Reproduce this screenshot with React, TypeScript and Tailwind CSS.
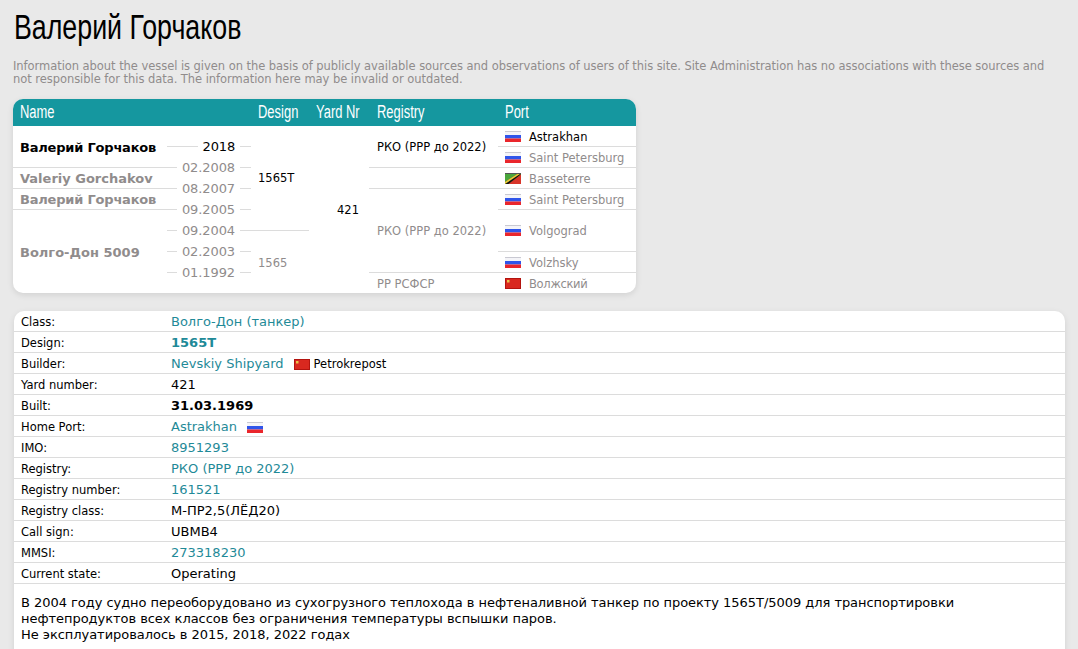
const narrow = "font-['Liberation_Sans',sans-serif]"

function FlagRu() {
  return (
    <svg width="16" height="11" viewBox="0 0 16 11" className="shrink-0">
      <rect width="16" height="4" fill="#f4f4f8" />
      <rect y="4" width="16" height="3.5" fill="#2f55ea" />
      <rect y="7.5" width="16" height="3.5" fill="#ea262c" />
      <rect width="16" height="1" fill="#c9c9d2" />
    </svg>
  )
}

function FlagKn() {
  return (
    <svg width="16" height="11" viewBox="0 0 16 11" className="shrink-0">
      <rect width="16" height="11" fill="#d8352a" />
      <polygon points="0,0 14,0 0,9" fill="#4aa63c" />
      <polygon points="0,9 14,0 16,0 16,1.5 3,11 0,11" fill="#e8cf3a" />
      <polygon points="0,11 15,1 16,1.5 3.5,11" fill="#111" />
      <rect width="16" height="1" fill="#555" />
    </svg>
  )
}

function FlagCn() {
  return (
    <svg width="16" height="11" viewBox="0 0 16 11" className="shrink-0">
      <rect width="16" height="11" fill="#d9281f" />
      <rect x="0.5" y="0.5" width="15" height="10" fill="none" stroke="#b3140f" />
      <rect x="2" y="2" width="2.5" height="2.5" fill="#e9c14a" />
    </svg>
  )
}

const dates = [
  { d: '2018', on: true, left: 'w-[31px]' },
  { d: '02.2008', left: 'flex-1' },
  { d: '08.2007', left: 'flex-1' },
  { d: '09.2005', left: 'flex-1' },
  { d: '09.2004', left: 'flex-1' },
  { d: '02.2003', left: 'flex-1' },
  { d: '01.1992', left: 'flex-1' },
]

const nameCell = 'flex items-center pl-[7px] pt-[2px] text-[13px] font-bold'
const line = 'border-b border-[#dcdcdc]'
const small = 'flex items-center pt-[2px] text-[11.5px]'
const portCell = 'flex items-center gap-2 pl-[7px] text-[11.5px] text-[#908c8c]'

// the site's header font is a narrow one, squeezed here from Liberation Sans
function Squeezed({ children, className }: { children: React.ReactNode; className: string }) {
  return <span className={`inline-block origin-left whitespace-nowrap ${narrow} ${className}`}>{children}</span>
}

function History() {
  return (
    <div className="w-[623px] rounded-[10px] bg-white shadow-[0_2px_6px_rgba(0,0,0,0.1)] overflow-hidden">
      <div className="h-[27px] pb-[2px] bg-[#15979f] text-white text-[18px] flex items-center">
        <div className="w-[238px] pl-[7px]"><Squeezed className="scale-x-[0.72]">Name</Squeezed></div>
        <div className="w-[58px] pl-[7px]"><Squeezed className="scale-x-[0.72]">Design</Squeezed></div>
        <div className="w-[60px] pl-[7px]"><Squeezed className="scale-x-[0.72]">Yard Nr</Squeezed></div>
        <div className="w-[129px] pl-[8px]"><Squeezed className="scale-x-[0.72]">Registry</Squeezed></div>
        <div className="pl-[7px]"><Squeezed className="scale-x-[0.72]">Port</Squeezed></div>
      </div>
      <div className="grid grid-cols-[154px_84px_58px_60px_129px_138px] grid-rows-[repeat(8,21px)] h-[167px] overflow-hidden">
        <div className={`${nameCell} col-start-1 row-start-1 row-span-2 text-black tracking-[-0.2px] ${line}`}>Валерий Горчаков</div>
        <div className={`${nameCell} col-start-1 row-start-3 text-[#908c8c] ${line}`}>Valeriy Gorchakov</div>
        <div className={`${nameCell} col-start-1 row-start-4 text-[#908c8c] tracking-[-0.2px] ${line}`}>Валерий Горчаков</div>
        <div className={`${nameCell} col-start-1 row-start-5 row-span-4 text-[#908c8c]`}>Волго-Дон 5009</div>

        <div className="col-start-2 row-start-1 row-span-8 pt-[10px]">
          {dates.map(x => (
            <div key={x.d} className="h-[21px] flex items-center text-[13px]">
              <div className={`${x.left} h-px bg-[#dcdcdc]`} />
              <span className={`px-[5px] tracking-[-0.1px] ${x.on ? 'ml-auto text-black' : 'text-[#908c8c]'}`}>{x.d}</span>
              <div className="w-[11px] h-px bg-[#dcdcdc]" />
            </div>
          ))}
        </div>

        <div className={`${small} col-start-3 row-start-1 row-span-5 pl-[7px] text-black ${line}`}>1565T</div>
        <div className={`${small} col-start-3 row-start-6 row-span-3 pl-[7px] text-[#908c8c]`}>1565</div>

        <div className={`${small} col-start-4 row-start-1 row-span-8 pl-[28px] text-black`}>421</div>

        <div className={`${small} col-start-5 row-start-1 row-span-2 pl-[8px] text-black ${line}`}>РКО (РРР до 2022)</div>
        <div className={`col-start-5 row-start-3 ${line}`} />
        <div className={`${small} col-start-5 row-start-4 row-span-4 pl-[8px] text-[#908c8c] ${line}`}>РКО (РРР до 2022)</div>
        <div className={`${small} col-start-5 row-start-8 pl-[8px] text-[#908c8c]`}>РР РСФСР</div>

        <div className={`${portCell} col-start-6 row-start-1 ${line} !text-black`}><FlagRu /><span className="pt-[4px]">Astrakhan</span></div>
        <div className={`${portCell} col-start-6 row-start-2 ${line}`}><FlagRu /><span className="pt-[4px]">Saint Petersburg</span></div>
        <div className={`${portCell} col-start-6 row-start-3 ${line}`}><FlagKn /><span className="pt-[4px]">Basseterre</span></div>
        <div className={`${portCell} col-start-6 row-start-4 ${line}`}><FlagRu /><span className="pt-[4px]">Saint Petersburg</span></div>
        <div className={`${portCell} col-start-6 row-start-5 row-span-2 ${line}`}><FlagRu /><span className="pt-[2px]">Volgograd</span></div>
        <div className={`${portCell} col-start-6 row-start-7 ${line}`}><FlagRu /><span className="pt-[4px]">Volzhsky</span></div>
        <div className={`${portCell} col-start-6 row-start-8`}><FlagCn /><span className="pt-[2px] tracking-[-0.3px]">Волжский</span></div>
      </div>
    </div>
  )
}

const link = 'text-[#1f8a98]'

function Row({ label, children }: { label: string; children: React.ReactNode }) {
  return (
    <div className="h-[21px] flex items-center pt-[2px] border-b border-[#dcdcdc]">
      <div className="w-[157px] pl-[7px] pt-[2px] text-[11.5px] text-black">{label}</div>
      <div className="flex items-center text-[13px] text-black">{children}</div>
    </div>
  )
}

export default function App() {
  return (
    <div className="h-[649px] overflow-hidden bg-[#e9e9e9] font-['DejaVu_Sans','Verdana',sans-serif]">
      <div className="pl-[13px] pr-[13px]">
        <h1 className="h-[60px] pl-px pt-[6px] text-[35px] leading-[42px] font-normal text-black">
          <Squeezed className="scale-x-[0.765]">Валерий Горчаков</Squeezed>
        </h1>
        <p className="text-[11.5px] leading-[13px] tracking-[-0.05px] text-[#908c8c] h-[39px]">
          Information about the vessel is given on the basis of publicly available sources and observations of users of this site. Site Administration has no associations with these sources and not responsible for this data. The information here may be invalid or outdated.
        </p>
        <History />
      </div>
      <div className="ml-[14px] mt-[18px] w-[1051px] rounded-t-[10px] bg-white shadow-[0_2px_6px_rgba(0,0,0,0.1)] h-[400px]">
        <Row label="Class:"><span className={link}>Волго-Дон (танкер)</span></Row>
        <Row label="Design:"><span className={`${link} font-bold`}>1565T</span></Row>
        <Row label="Builder:">
          <span className={link}>Nevskiy Shipyard</span>
          <span className="ml-[10px] mr-[4px]"><FlagCn /></span>
          <span className="pt-[2px] text-[11.5px]">Petrokrepost</span>
        </Row>
        <Row label="Yard number:">421</Row>
        <Row label="Built:"><span className="font-bold">31.03.1969</span></Row>
        <Row label="Home Port:">
          <span className={link}>Astrakhan</span>
          <span className="ml-[10px]"><FlagRu /></span>
        </Row>
        <Row label="IMO:"><span className={link}>8951293</span></Row>
        <Row label="Registry:"><span className={link}>РКО (РРР до 2022)</span></Row>
        <Row label="Registry number:"><span className={link}>161521</span></Row>
        <Row label="Registry class:">М-ПР2,5(ЛЁД20)</Row>
        <Row label="Call sign:">UBMB4</Row>
        <Row label="MMSI:"><span className={link}>273318230</span></Row>
        <Row label="Current state:">Operating</Row>
        <p className="pt-[11px] px-[7px] text-[13px] leading-[16px] tracking-[-0.04px] text-black">
          В 2004 году судно переоборудовано из сухогрузного теплохода в нефтеналивной танкер по проекту 1565Т/5009 для транспортировки<br />
          нефтепродуктов всех классов без ограничения температуры вспышки паров.<br />
          Не эксплуатировалось в 2015, 2018, 2022 годах
        </p>
      </div>
    </div>
  )
}
